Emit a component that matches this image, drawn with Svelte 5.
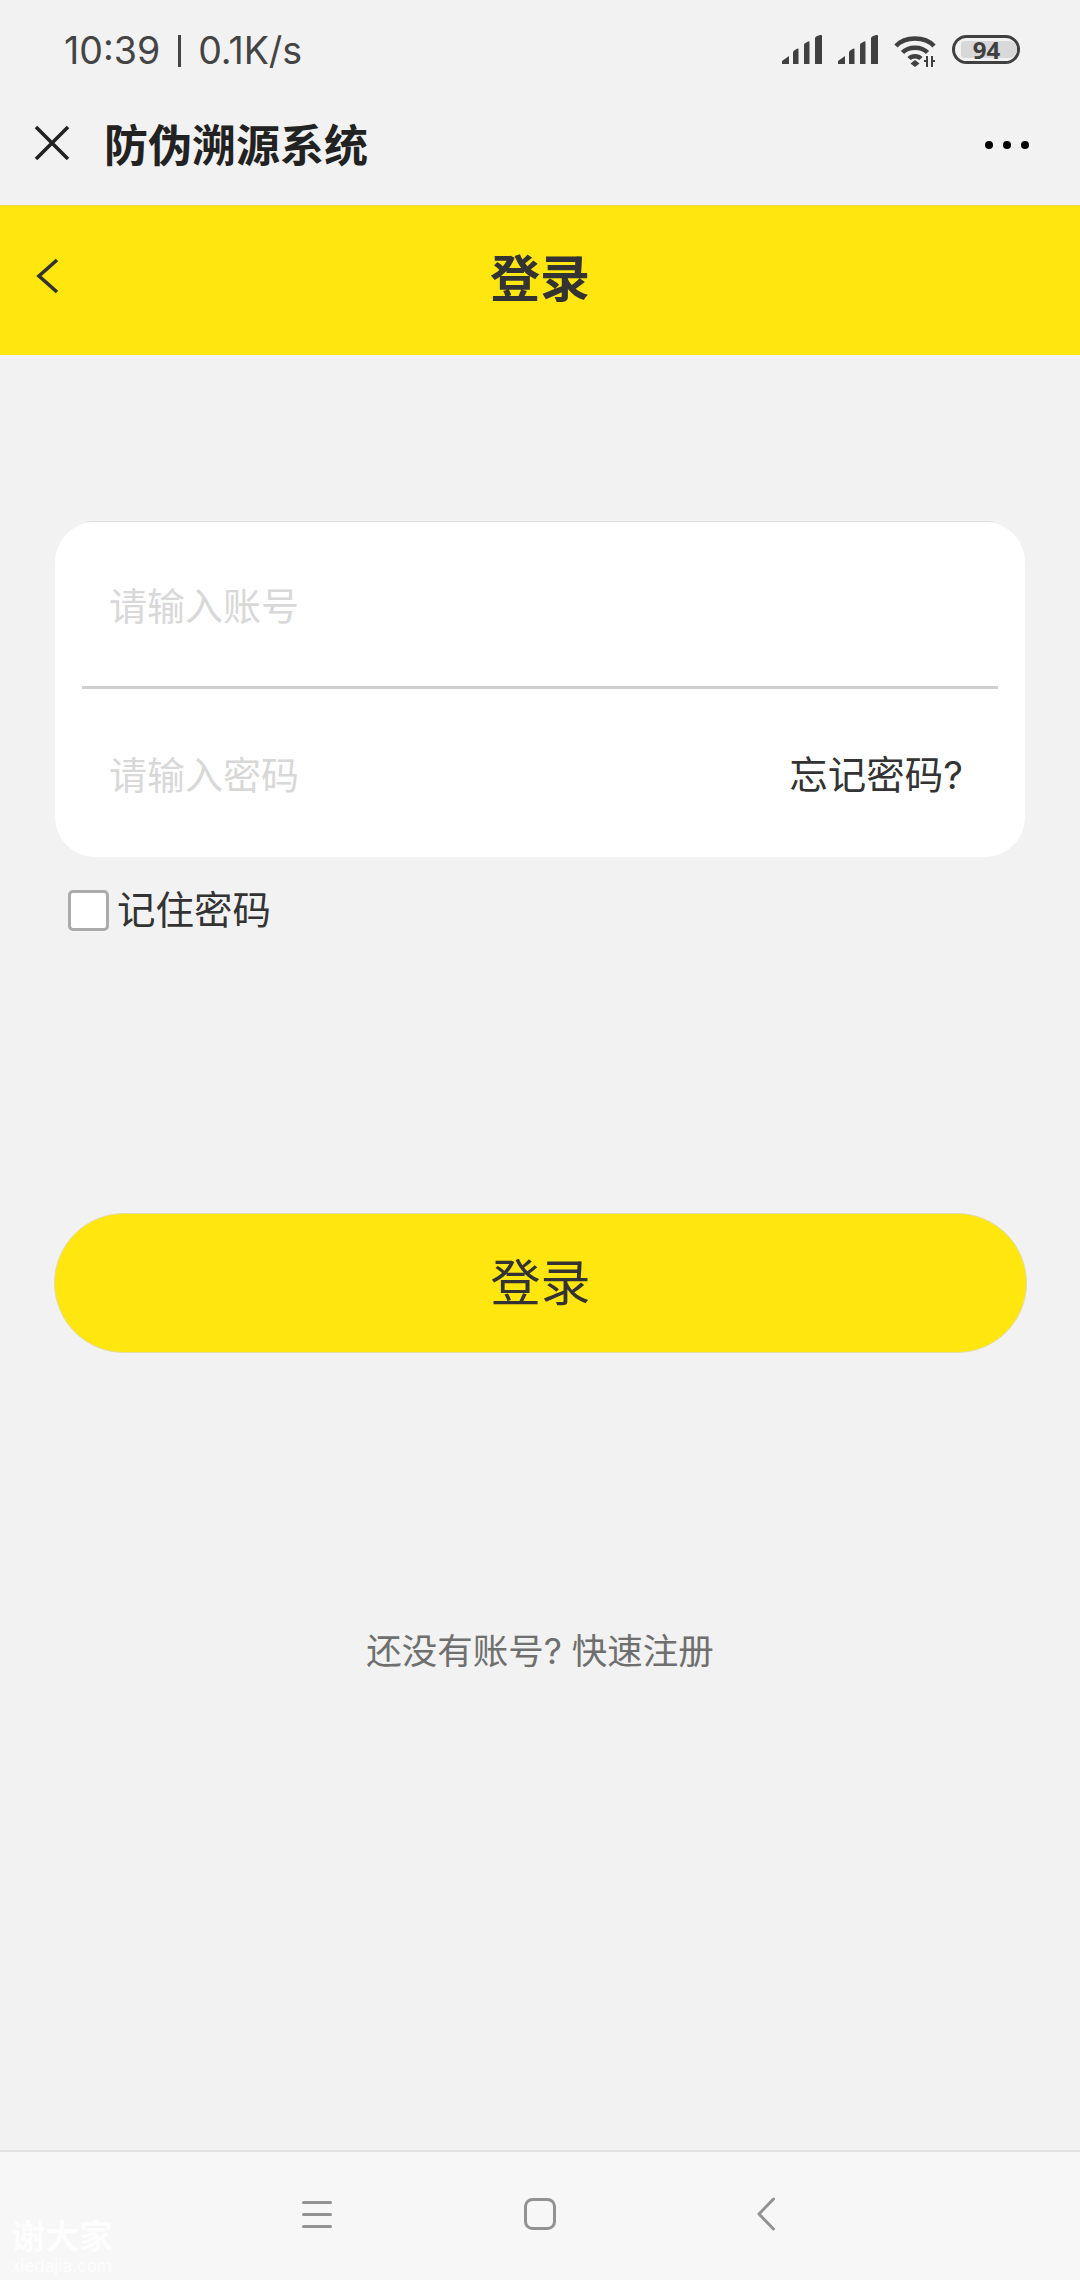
<script>
  // static login screen, nothing is wired up
  const navBars = [2, 14, 26];
</script>

<div class="page">
  <div class="status">
    <span class="clock">10:39<i class="sep"></i>0.1K/s</span>
    <div class="status-icons">
      {#each [0, 1] as sim (sim)}
        <svg width="40" height="29" viewBox="0 0 40 29" fill="#404040">
          <path d="M0 29v-3l7-5v8zM11 29V17.500q0-1.500 1.500-2.200l3-1.800q1-.5 1 1V29zM22 29V10q0-1.500 1.500-2l2.500-1.500q1.500-.8 1.500 1V29zM33 29V3.500q0-1.500 1.500-2.300L38 .0q2-.5 2 1V29z"/>
        </svg>
      {/each}
      <svg class="wifi" width="44" height="32" viewBox="0 0 44 32">
        <g fill="none" stroke="#404040" stroke-width="4.500">
          <path d="M2 11C11 1 31 1 40 11"/>
          <path d="M8.500 17.500C14.500 11 27.500 11 33.500 17.500"/>
          <path d="M15 23.500C18 20.500 24 20.500 27 23.500"/>
        </g>
        <path d="M21 25l4.500 3.500L21 32l-4.500-3.500z" fill="#404040"/>
        <path d="M33 21v11M38 21v11M30 26h3M38 26h3" fill="none" stroke="#404040" stroke-width="2"/>
      </svg>
      <div class="battery"><span class="level">94</span></div>
    </div>
  </div>

  <div class="wx-bar">
    <svg width="36" height="36" viewBox="0 0 36 36">
      <path d="M2 2l32 32M34 2L2 34" fill="none" stroke="#222" stroke-width="3.600"/>
    </svg>
    <span class="wx-title">防伪溯源系统</span>
    <div class="dots"><i></i><i></i><i></i></div>
  </div>

  <header class="head">
    <svg class="back" width="24" height="36" viewBox="0 0 24 36">
      <path d="M21 2L3 18l18 16" fill="none" stroke="#333" stroke-width="3.600"/>
    </svg>
    <span class="head-title">登录</span>
  </header>

  <main class="content">
    <section class="card">
      <div class="field first"><span class="placeholder">请输入账号</span></div>
      <div class="field">
        <span class="placeholder">请输入密码</span>
        <span class="forgot">忘记密码?</span>
      </div>
    </section>

    <div class="remember">
      <span class="check"></span>
      <span>记住密码</span>
    </div>

    <button type="button" class="submit">登录</button>

    <p class="signup">还没有账号? 快速注册</p>
  </main>

  <nav class="sysnav">
    <div class="watermark">
      <span class="wm-name">谢大家</span>
      <span class="wm-url">xiedajia.com</span>
    </div>
    <svg width="34" height="30" viewBox="0 0 34 30">
      {#each navBars as y (y)}
        <rect x="2" {y} width="30" height="3" rx="1.500" fill="#929292"/>
      {/each}
    </svg>
    <svg class="home" width="34" height="34" viewBox="0 0 34 34">
      <rect x="2.500" y="2.500" width="29" height="29" rx="7" fill="none" stroke="#929292" stroke-width="3"/>
    </svg>
    <svg width="20" height="34" viewBox="0 0 20 34">
      <path d="M17.500 2L3 17l14.500 15" fill="none" stroke="#929292" stroke-width="3" stroke-linecap="round" stroke-linejoin="round"/>
    </svg>
  </nav>
</div>

<style>
  :global(body) {
    margin: 0;
    background: #f2f2f2;
  }

  .page {
    display: flex;
    flex-direction: column;
    width: 1080px;
    height: 2280px;
    overflow: hidden;
    background: #f2f2f2;
    color: #333;
    font-family: "Inter", "Noto Sans CJK SC", sans-serif;
  }

  .status {
    display: flex;
    align-items: flex-start;
    justify-content: space-between;
    box-sizing: border-box;
    height: 70px;
    padding: 29px 60px 0 64px;
  }

  .clock {
    display: flex;
    align-items: center;
    height: 44px;
    font-size: 37.500px;
    line-height: 44px;
    color: #444;
  }

  .sep {
    width: 3px;
    height: 32px;
    margin: 0 17px 0 18px;
    background: #444;
  }

  .status-icons {
    display: flex;
    align-items: flex-start;
    gap: 16px;
    margin-top: 6px;
  }

  .wifi {
    margin-right: -2px;
  }

  .battery {
    box-sizing: border-box;
    display: flex;
    width: 68px;
    height: 29px;
    padding: 3px 0 3px 6px;
    border: 3px solid #404040;
    border-radius: 15px;
  }

  .level {
    flex: 1;
    box-sizing: border-box;
    padding-right: 5px;
    border-radius: 3px 8px 8px 3px;
    background: #d8d8d8;
    color: #404040;
    font-size: 24px;
    font-weight: 700;
    line-height: 17px;
    text-align: center;
    font-family: "Noto Sans", sans-serif;
  }

  .wx-bar {
    display: flex;
    align-items: center;
    box-sizing: border-box;
    height: 135px;
    padding: 10px 51px 0 34px;
  }

  .wx-title {
    flex: 1;
    margin-left: 34px;
    font-size: 44px;
    font-weight: 700;
    color: #222;
  }

  .dots {
    display: flex;
    gap: 10px;
    margin-top: 4px;
  }

  .dots i {
    width: 8px;
    height: 8px;
    border-radius: 50%;
    background: #000;
  }

  .head {
    position: relative;
    display: flex;
    align-items: center;
    justify-content: center;
    box-sizing: border-box;
    height: 150px;
    padding-bottom: 12px;
    background: #ffe60f;
    border-top: 1px solid #e9d84e;
  }

  .back {
    position: absolute;
    left: 36px;
    top: 52px;
  }

  .head-title {
    font-size: 50px;
    font-weight: 700;
    color: #333;
  }

  .content {
    flex: 1;
    display: flex;
    flex-direction: column;
    padding: 167px 54px 0;
  }

  .card {
    position: relative;
    box-sizing: border-box;
    height: 335px;
    margin: 0 1px;
    padding: 0 27px;
    background: #fff;
    border-radius: 40px;
  }

  /* hairline on the straight part of the top edge only */
  .card::before {
    content: "";
    position: absolute;
    top: -1px;
    left: 32px;
    right: 32px;
    height: 1px;
    background: #e0e0e0;
  }

  .field {
    display: flex;
    align-items: center;
    justify-content: space-between;
    box-sizing: border-box;
    height: 167px;
    padding: 0 35px 1px 27px;
    font-size: 38px;
  }

  .field.first {
    height: 167px;
    padding-bottom: 2px;
    border-bottom: 3px solid #cfcfcf;
  }

  .placeholder {
    color: #d8d8d8;
  }

  .forgot {
    color: #333;
    font-size: 38.500px;
  }

  .remember {
    display: flex;
    align-items: center;
    gap: 8px;
    margin: 32px 0 0 14px;
    font-size: 38.500px;
    line-height: 42px;
    color: #333;
  }

  .check {
    box-sizing: border-box;
    width: 41px;
    height: 41px;
    background: #fff;
    border: 3px solid #ababab;
    border-radius: 5px;
  }

  .submit {
    display: block;
    box-sizing: border-box;
    width: 973px;
    height: 140px;
    margin-top: 282px;
    padding: 0 0 8px;
    background: #ffe60f;
    border: 1px solid #e2dcb0;
    border-radius: 70px;
    color: #333;
    font-family: inherit;
    font-size: 50px;
  }

  .signup {
    margin: 277px 0 0;
    font-size: 35.500px;
    line-height: 44px;
    text-align: center;
    color: #6f6f6f;
  }

  .sysnav {
    position: relative;
    display: flex;
    align-items: center;
    box-sizing: border-box;
    height: 130px;
    padding: 0 304px 4px 300px;
    justify-content: space-between;
    background: #f7f7f7;
    border-top: 2px solid #e3e3e3;
  }

  .home {
    margin-right: 10px;
  }

  .watermark {
    position: absolute;
    left: 11px;
    bottom: 4px;
    display: flex;
    flex-direction: column;
    color: #fff;
    opacity: 0.75;
  }

  .wm-name {
    font-size: 34px;
    font-weight: 700;
    line-height: 38px;
  }

  .wm-url {
    font-size: 17px;
    line-height: 20px;
  }
</style>
